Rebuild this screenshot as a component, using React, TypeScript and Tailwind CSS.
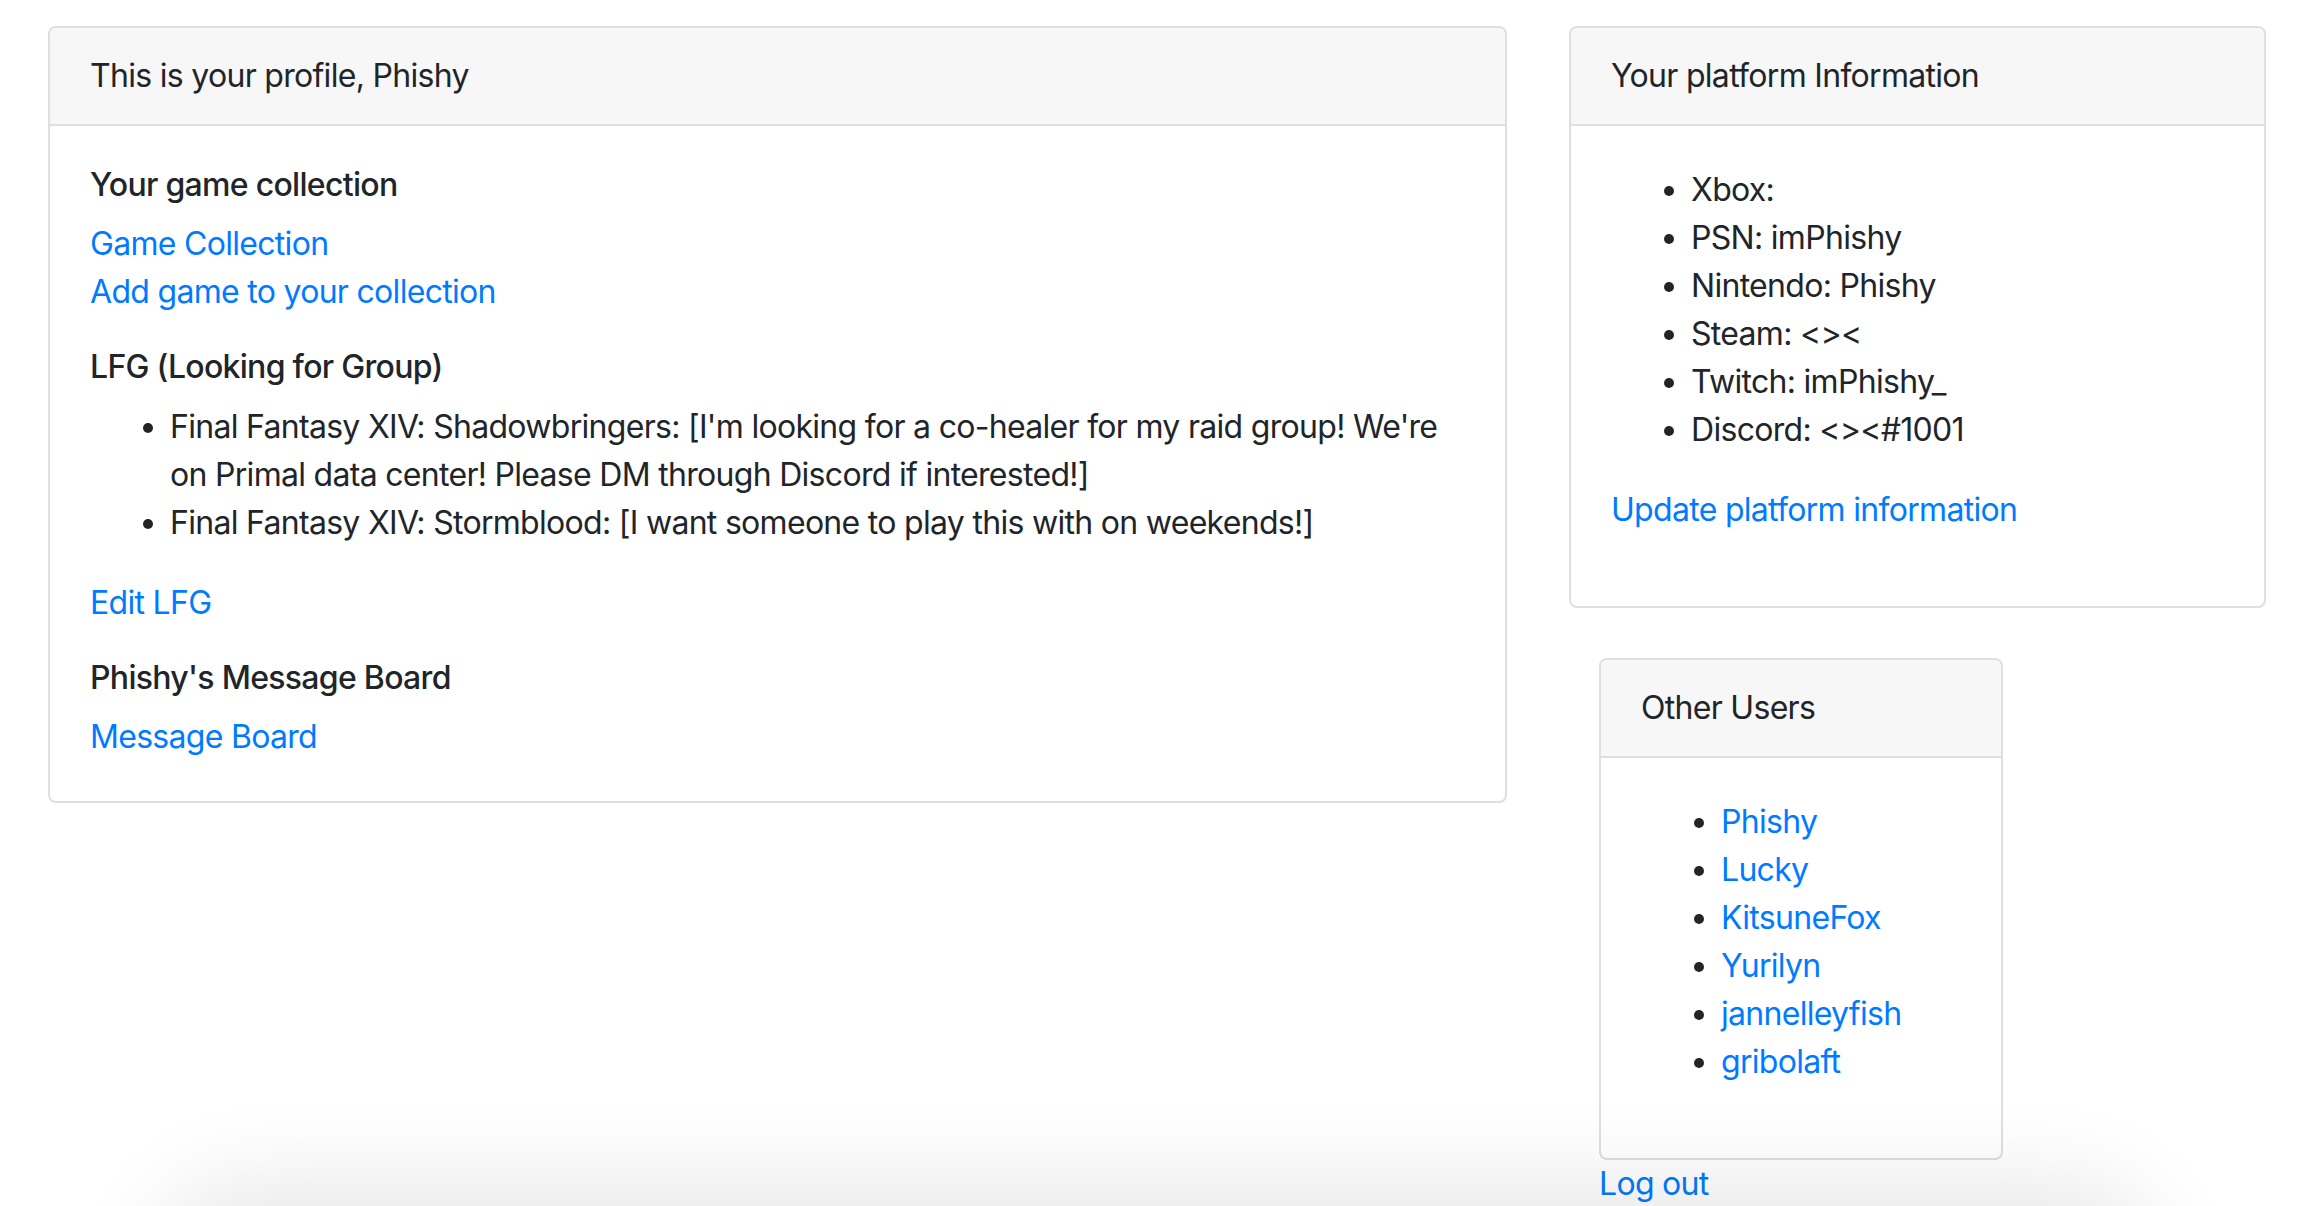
import React from 'react';

const users = ['Phishy', 'Lucky', 'KitsuneFox', 'Yurilyn', 'jannelleyfish', 'gribolaft'];

const platforms = [
  'Xbox:',
  'PSN: imPhishy',
  'Nintendo: Phishy',
  'Steam: <><',
  'Twitch: imPhishy_',
  'Discord: <><#1001',
];

const Card = ({ title, children, className = '' }: { title: string; children: React.ReactNode; className?: string }) => (
  <div className={`border-2 border-[#dfdfdf] rounded-[8px] bg-white overflow-hidden ${className}`}>
    <div className="bg-[#f7f7f7] border-b-2 border-[#dfdfdf] px-[40px] py-[24px]">{title}</div>
    <div className="p-[40px]">{children}</div>
  </div>
);

const Link = ({ children }: { children: React.ReactNode }) => (
  <a href="#" className="text-[#007bff]">
    {children}
  </a>
);

export default function App() {
  return (
    <div
      className="relative h-[1206px] overflow-hidden bg-white text-[#212529] text-[32px] leading-[48px] tracking-[-0.7px]"
      style={{ fontFamily: 'Inter, "Noto Sans", sans-serif' }}
    >
      <div className="flex items-start gap-[62px] pt-[26px] pl-[48px]">
        {/* profile card */}
        <Card title="This is your profile, Phishy" className="w-[1459px]">
          <h6 className="font-medium leading-[1.2] mb-[16px]">Your game collection</h6>
          <p className="mb-[32px]">
            <Link>Game Collection</Link>
            <br />
            <Link>Add game to your collection</Link>
          </p>
          <h6 className="font-medium leading-[1.2] mb-[16px]">LFG (Looking for Group)</h6>
          <ul className="list-disc pl-[80px] mb-[32px]">
            <li>
              Final Fantasy XIV: Shadowbringers: [I'm looking for a co-healer for my raid group! We're
              <br />
              on Primal data center! Please DM through Discord if interested!]
            </li>
            <li>Final Fantasy XIV: Stormblood: [I want someone to play this with on weekends!]</li>
          </ul>
          <p className="mb-[32px]">
            <Link>Edit LFG</Link>
          </p>
          <h6 className="font-medium leading-[1.2] mb-[16px]">Phishy's Message Board</h6>
          <p>
            <Link>Message Board</Link>
          </p>
        </Card>

        {/* right column */}
        <div className="w-[697px] flex flex-col">
          <Card title="Your platform Information">
            <ul className="list-disc pl-[80px] mb-[32px]">
              {platforms.map((p) => (
                <li key={p}>{p}</li>
              ))}
            </ul>
            <p className="mb-[32px]">
              <Link>Update platform information</Link>
            </p>
          </Card>

          <div className="ml-[30px] mt-[50px] w-[404px]">
            <Card title="Other Users">
              <ul className="list-disc pl-[80px] mb-[32px]">
                {users.map((u) => (
                  <li key={u}>
                    <Link>{u}</Link>
                  </li>
                ))}
              </ul>
            </Card>
            <Link>Log out</Link>
          </div>
        </div>
      </div>

      {/* shadow cast from below the window */}
      <div className="pointer-events-none absolute left-[190px] right-[190px] top-[1240px] h-[120px] rounded-full shadow-[0_-20px_90px_40px_rgba(0,0,0,0.09)]" />
    </div>
  );
}
